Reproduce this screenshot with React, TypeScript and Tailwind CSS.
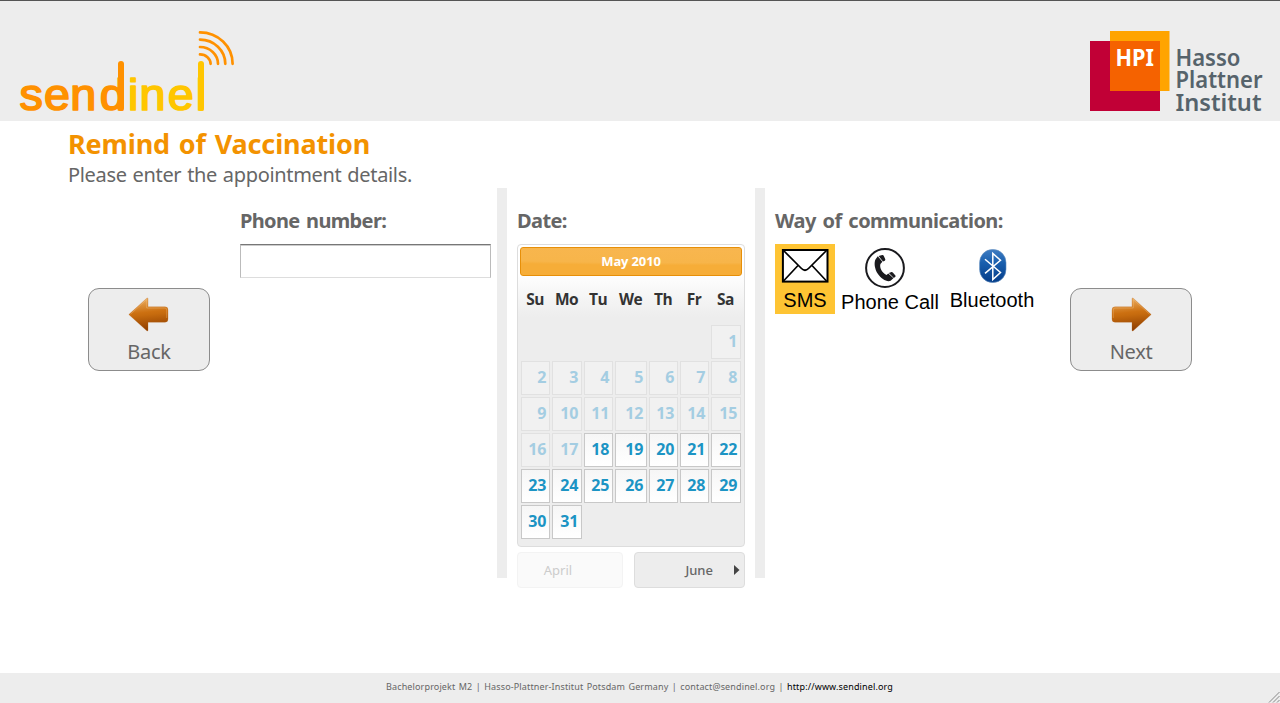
import React from "react";

const WEEKDAYS = ["Su", "Mo", "Tu", "We", "Th", "Fr", "Sa"];
const LEADING_BLANKS = 6;
const FIRST_ENABLED_DAY = 18;
const DAYS = Array.from({ length: 31 }, (_, i) => i + 1);

function SendinelLogo() {
  return (
    <svg width="220" height="93" viewBox="16 28 220 93" className="block overflow-visible">
      <g fontFamily="Liberation Sans, sans-serif" fontSize="44.5" strokeWidth="1.7" strokeLinejoin="round" transform="scale(1.05 1)">
        <text y="110" x="18.6 41.8 67 94.9" fill="#ff9100" stroke="#ff9100">send</text>
        <text y="110" x="121.8 132.8 159.8 186.5" fill="#ffc600" stroke="#ffc600">inel</text>
      </g>
      <path d="M121 64V108" stroke="#ff9100" strokeWidth="6" strokeLinecap="round" />
      <path d="M201 64V108" stroke="#ffc600" strokeWidth="6" strokeLinecap="round" />
      <g fill="none" stroke="#ff9100" strokeWidth="2.7" strokeLinecap="round">
        <path d="M200 32.4A32.6 31.4 0 0 1 232.6 63.8" />
        <path d="M200 39.6A25.3 24.2 0 0 1 225.3 63.8" />
        <path d="M200 47A18 16.8 0 0 1 218 63.8" />
        <path d="M200 54.4A10.6 9.4 0 0 1 210.6 63.8" />
      </g>
    </svg>
  );
}

function HpiLogo() {
  return (
    <svg width="174" height="90" viewBox="1090 30 174 90" className="block overflow-visible">
      <rect x="1090" y="41" width="70" height="70" fill="#c10036" />
      <rect x="1110" y="31" width="59.5" height="60" fill="#ffa400" />
      <rect x="1110" y="41" width="50" height="50" fill="#f56200" />
      <g fontFamily="Noto Sans, sans-serif">
        <text x="1115.5" y="66" fontSize="23.5" fontWeight="700" fill="#fff" textLength="38.5" lengthAdjust="spacingAndGlyphs">HPI</text>
        <g fill="#56636b" fontSize="22.5" fontWeight="600">
          <text x="1175.5" y="65.5" textLength="65" lengthAdjust="spacingAndGlyphs">Hasso</text>
          <text x="1175.5" y="88" textLength="87" lengthAdjust="spacingAndGlyphs">Plattner</text>
          <text x="1175.5" y="110.5" textLength="86" lengthAdjust="spacingAndGlyphs">Institut</text>
        </g>
      </g>
    </svg>
  );
}

function Arrow({ direction }: { direction: "left" | "right" }) {
  const left = direction === "left";
  const id = "arrow-" + direction;
  const shape = left
    ? "M.8 17.5 18.8 1.2Q20 .3 20 2V9.8H37Q40 9.8 40 13V22Q40 25.2 37 25.2H20V33Q20 34.7 18.8 33.8Z"
    : "M40.2 17.5 22.2 1.2Q21 .3 21 2V9.8H4Q1 9.8 1 13V22Q1 25.2 4 25.2H21V33Q21 34.7 22.2 33.8Z";
  return (
    <svg width="41" height="35" viewBox="0 0 41 35" className="block">
      <defs>
        <linearGradient id={id} x1="0" y1="0" x2="0.12" y2="1">
          <stop offset="0" stopColor="#efb66c" />
          <stop offset="0.48" stopColor="#cc7011" />
          <stop offset="0.56" stopColor="#c66b0e" />
          <stop offset="1" stopColor="#903f00" />
        </linearGradient>
      </defs>
      <path d={shape} fill={"url(#" + id + ")"} stroke="#b7641a" strokeOpacity=".45" strokeWidth=".6" />
      <path
        d={left ? "M2.5 17.2 18.7 2.5V11H37Q38.7 11 38.7 13V21" : "M2.3 21V13Q2.3 11 4 11H22.3V2.5L38.5 17.2"}
        fill="none"
        stroke="#f8ca91"
        strokeOpacity=".4"
        strokeWidth=".8"
      />
    </svg>
  );
}

function NavButton({ direction, children }: { direction: "left" | "right"; children: React.ReactNode }) {
  return (
    <button className="mt-[100px] flex h-[83px] w-[122px] shrink-0 flex-col items-center rounded-[11px] border border-[#8c8c8c] bg-[#ededed] pt-2 text-[20px] leading-[24px] tracking-[-0.3px] text-[#666]">
      <span className={direction === "left" ? "pr-[2px]" : "pl-px"}>
        <Arrow direction={direction} />
      </span>
      <span className="mt-[8px]">{children}</span>
    </button>
  );
}

function Envelope() {
  return (
    <svg width="48" height="36" viewBox="0 0 48 36" className="block">
      <rect x="1.9" y="2" width="44.6" height="31.6" fill="#fff" stroke="#000" strokeWidth="2" />
      <path d="M2.5 2.5 20.5 20.5Q24 24 27.5 20.5L45.5 2.5M2.5 33 17 17.5M45.5 33 31 17.5" fill="none" stroke="#000" strokeWidth="1.7" />
    </svg>
  );
}

function PhoneIcon() {
  return (
    <svg width="40" height="40" viewBox="0 0 40 40" className="block">
      <circle cx="20" cy="20" r="18.9" fill="#fff" stroke="#1a1a1e" strokeWidth="2" />
      <path d="M10.6 11.2 12.8 8.3 17.4 13.8 15.4 15.9C14.4 19.8 16.8 24.5 21.5 27L23.3 25.4 28.4 30.2 25.6 32.8C22 34.2 16.2 31.2 12.8 25.8C9.5 20.7 8.8 14.5 10.6 11.2ZM13.6 7.9 17.3 7Q18.2 6.9 18.7 7.7L20.3 11.3Q20.5 12.2 19.8 12.7L18 13.5ZM23.9 25 26.5 24.1Q27.3 24 27.8 24.5L30.4 27.5Q30.8 28.1 30.4 28.7L28.8 30Z" fill="#1a1a1e" />
    </svg>
  );
}

function BluetoothIcon() {
  return (
    <svg width="28" height="34" viewBox="0 0 28 34" className="block">
      <defs>
        <linearGradient id="bt" x1="0" y1="0" x2="0" y2="1">
          <stop offset="0" stopColor="#3e7cc2" />
          <stop offset="0.4" stopColor="#195fae" />
          <stop offset="1" stopColor="#053d89" />
        </linearGradient>
      </defs>
      <rect x=".6" y=".6" width="26.4" height="32.8" rx="12.4" ry="13.2" fill="url(#bt)" stroke="#5e8cbd" strokeWidth=".6" />
      <path d="M6 10.2 21.5 23.5 13.8 30.5V4.5L21.5 11.2 6 24.4" fill="none" stroke="#fff" strokeWidth="1.5" />
    </svg>
  );
}

function Calendar() {
  return (
    <div className="h-[303px] w-[228px] rounded-[4px] border border-[#ddd] bg-[linear-gradient(#fff_0px,#fff_28px,#ededed_72px,#ededed_100%)] p-[2px] font-['Open_Sans',sans-serif]">
      <div className="h-[29px] w-[222px] rounded-[3px] border border-[#e78f08] bg-[radial-gradient(ellipse_360px_16px_at_75%_0%,#f8b64f_0%,#f7b54a_92%,#f6ad38_108%)] text-center text-[13px] leading-[26px] font-bold tracking-[-0.15px] text-white">
        May 2010
      </div>
      <div className="mt-[9px] grid h-[28px] grid-cols-[29px_30px_29px_32px_29px_29px_30px] gap-x-[2px] pl-[0.5px] text-center text-[15.5px] leading-[28px] font-bold tracking-[-0.5px] text-[#333]">
        {WEEKDAYS.map((day) => (
          <span key={day}>{day}</span>
        ))}
      </div>
      <div className="ml-px mt-[12px] grid auto-rows-[34px] grid-cols-[29px_30px_29px_32px_29px_29px_30px] gap-[2px]">
        {Array.from({ length: LEADING_BLANKS }, (_, i) => (
          <span key={"blank" + i} />
        ))}
        {DAYS.map((day) => (
          <span
            key={day}
            className={
              day < FIRST_ENABLED_DAY
                ? "border border-[#e1e1e1] bg-[#f1f1f1] pr-[3px] text-right text-[16px] leading-[31px] font-bold tracking-[-0.3px] text-[#a4cde2]"
                : "border border-[#c8c8c8] bg-[linear-gradient(#f6f6f6,#fff)] pr-[3px] text-right text-[16px] leading-[31px] font-bold tracking-[-0.3px] text-[#1c94c4]"
            }
          >
            {day}
          </span>
        ))}
      </div>
    </div>
  );
}

export default function App() {
  return (
    <div className="flex h-[703px] w-[1280px] flex-col overflow-hidden bg-white font-['Noto_Sans',sans-serif] text-[#666]">
      <header className="flex h-[121px] shrink-0 items-start justify-between border-t border-[#555] bg-[#ededed] pl-4 pr-4">
        <div className="pt-[27px]"><SendinelLogo /></div>
        <div className="pt-[29px]"><HpiLogo /></div>
      </header>

      <main className="flex-1">
        <div className="h-[67px] pl-[68px] pt-[5px]">
          <h1 className="text-[27px] leading-[36px] font-bold tracking-[-0.15px] text-[#f39200] [word-spacing:2px]">Remind of Vaccination</h1>
          <p className="mt-px text-[20px] leading-[24px] tracking-[-0.33px] [word-spacing:1px]">Please enter the appointment details.</p>
        </div>

        <div className="flex pl-[88px]">
          <NavButton direction="left">Back</NavButton>

          <section className="ml-[30px] w-[257px] pt-[18px]">
            <label htmlFor="phone" className="block text-[20px] leading-[30px] font-bold tracking-[-0.66px] [word-spacing:2px]">Phone number:</label>
            <input id="phone" className="mt-2 block h-[34px] w-[251px] border border-t-[#777] border-r-[#bbb] border-b-[#ddd] border-l-[#bbb] bg-white px-2 shadow-[inset_0_1px_0_#ccc] outline-none" />
          </section>

          <div className="h-[390px] w-[10px] bg-[#ededed]" />

          <section className="w-[248px] pl-[10px] pt-[18px]">
            <h2 className="mb-2 text-[20px] leading-[30px] font-bold tracking-[-0.6px]">Date:</h2>
            <Calendar />
            <div className="mt-[5px] flex w-[228px] justify-between text-[13px] leading-[34px]">
              <button className="h-[36px] w-[106px] rounded-[4px] border border-[#f3f3f3] bg-[#fafafa] pr-[24px] text-[#ccc]">April</button>
              <button className="flex h-[36px] w-[111px] items-center justify-end rounded-[4px] border border-[#ddd] bg-[#ededed] pr-[4px] text-[#666]">
                <span className="mr-[21px] font-medium">June</span>
                <svg width="6" height="10" viewBox="0 0 6 10"><path d="M0 0 5.5 5 0 10Z" fill="#444" /></svg>
              </button>
            </div>
          </section>

          <div className="h-[390px] w-[10px] bg-[#ededed]" />

          <section className="w-[305px] pl-[10px] pt-[18px]">
            <h2 className="mb-2 text-[20px] leading-[30px] font-bold tracking-[-0.52px] [word-spacing:2px]">Way of communication:</h2>
            <div className="flex font-['Liberation_Sans',sans-serif] text-[20px] leading-[24px] text-black">
              <div className="flex h-[70px] w-[60px] flex-col items-center bg-[#fec433] pt-[4px]">
                <Envelope />
                <span className="mt-[4px]">SMS</span>
              </div>
              <div className="ml-[6px] flex w-[98px] flex-col items-center pt-[4px]">
                <div className="mr-[10px]"><PhoneIcon /></div>
                <span className="mt-[2px] whitespace-nowrap">Phone Call</span>
              </div>
              <div className="ml-[11px] flex w-[84px] flex-col items-center pt-[5px]">
                <div className="ml-[2px]"><BluetoothIcon /></div>
                <span className="mt-[5px]">Bluetooth</span>
              </div>
            </div>
          </section>

          <NavButton direction="right">Next</NavButton>
        </div>
      </main>

      <footer className="flex h-[30px] shrink-0 justify-between bg-[#ededed]">
        <p className="ml-[386px] text-[9px] leading-[28px] tracking-[0.14px] whitespace-pre [word-spacing:0.9px]">
          Bachelorprojekt M2 | Hasso-Plattner-Institut Potsdam Germany | contact@sendinel.org | <a className="text-black">http://www.sendinel.org</a>
        </p>
        <svg width="12" height="12" viewBox="0 0 12 12" className="self-end">
          <path d="M1 11.5 11.5 1M5 11.5 11.5 5M9 11.5 11.5 9" stroke="#888" strokeWidth="1" />
        </svg>
      </footer>
    </div>
  );
}
